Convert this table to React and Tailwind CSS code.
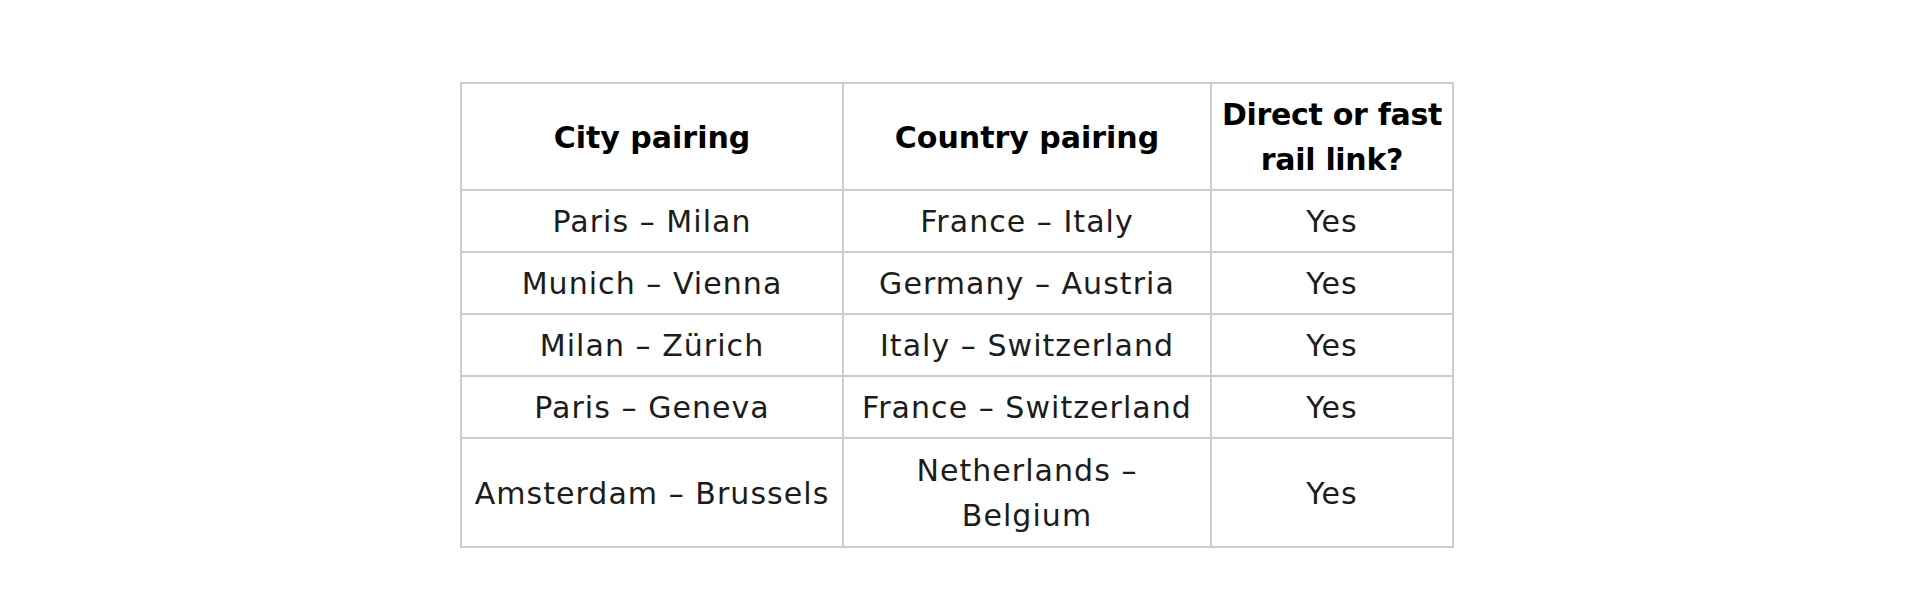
import React from "react";

const rows = [
  ["Paris – Milan", "France – Italy", "Yes"],
  ["Munich – Vienna", "Germany – Austria", "Yes"],
  ["Milan – Zürich", "Italy – Switzerland", "Yes"],
  ["Paris – Geneva", "France – Switzerland", "Yes"],
  ["Amsterdam – Brussels", "Netherlands – Belgium", "Yes"],
];

export default function App() {
  return (
    <div
      className="min-h-[597px] w-full bg-white pt-[82px] pl-[460px]"
      style={{ fontFamily: '"DejaVu Sans", "Liberation Sans", sans-serif' }}
    >
      <table className="table-fixed border-collapse w-[994px] text-[30px] leading-[45px] text-[#1c1c1c]">
        <colgroup>
          <col className="w-[382px]" />
          <col className="w-[368px]" />
          <col className="w-[242px]" />
        </colgroup>
        <thead>
          <tr>
            <th className="border-2 border-[#cccccc] px-1 pt-2 pb-[7px] text-center align-middle font-bold text-black whitespace-nowrap">
              City pairing
            </th>
            <th className="border-2 border-[#cccccc] px-1 pt-2 pb-[7px] text-center align-middle font-bold text-black whitespace-nowrap">
              Country pairing
            </th>
            <th className="border-2 border-[#cccccc] px-0 pt-2 pb-[7px] text-center align-middle font-bold text-black whitespace-nowrap tracking-[-0.01em]">
              Direct or fast
              <br />
              rail link?
            </th>
          </tr>
        </thead>
        <tbody>
          {rows.map((r, i) => {
            const last = i === rows.length - 1;
            const pad = last ? "pt-[9px] pb-[8px]" : "pt-2 pb-[7px]";
            return (
              <tr key={i}>
                <td className={`border-2 border-[#cccccc] px-1 ${pad} text-center align-middle font-normal tracking-[0.035em] whitespace-nowrap`}>
                  {r[0]}
                </td>
                <td className={`border-2 border-[#cccccc] px-1 ${pad} text-center align-middle font-normal tracking-[0.035em] whitespace-nowrap`}>
                  {last ? (
                    <>
                      Netherlands –
                      <br />
                      Belgium
                    </>
                  ) : (
                    r[1]
                  )}
                </td>
                <td className={`border-2 border-[#cccccc] px-1 ${pad} text-center align-middle font-normal tracking-[0.035em]`}>
                  {r[2]}
                </td>
              </tr>
            );
          })}
        </tbody>
      </table>
    </div>
  );
}
